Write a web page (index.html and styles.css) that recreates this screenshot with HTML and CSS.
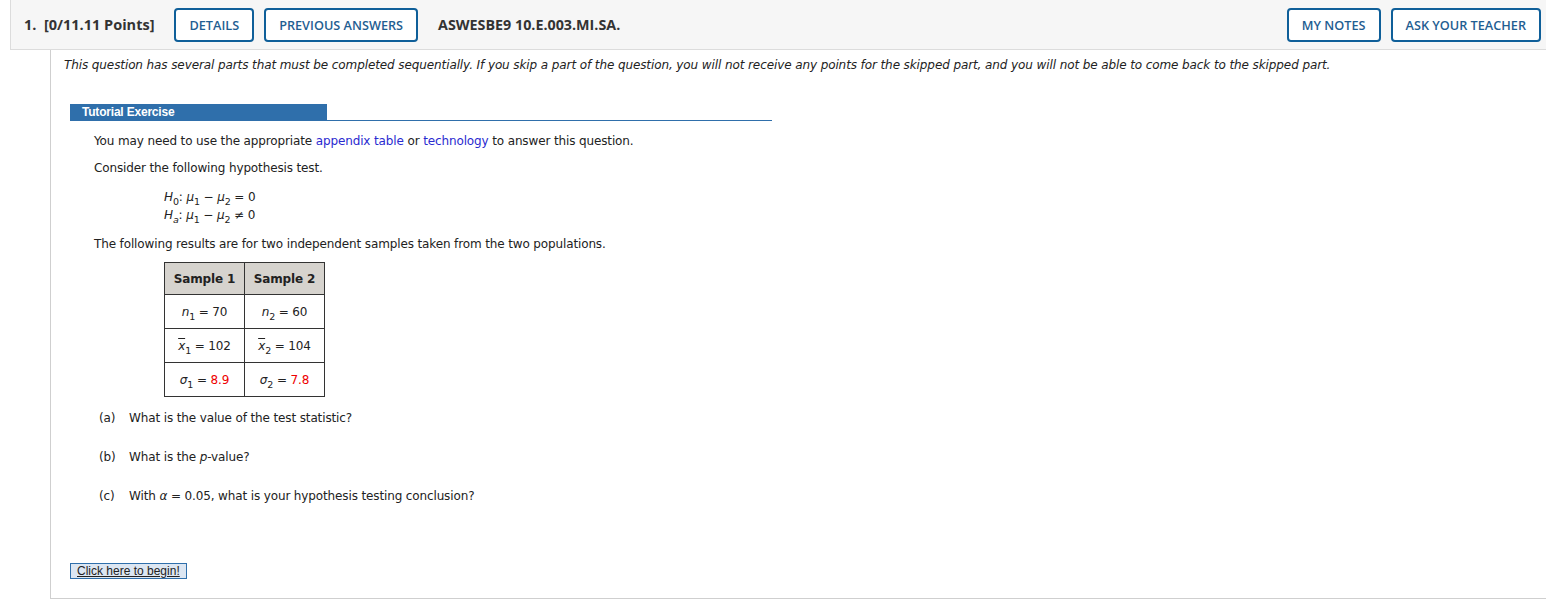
FILE: index.html
```html
<!DOCTYPE html>
<html>
<head>
<meta charset="utf-8">
<link rel="stylesheet" href="styles.css">
</head>
<body>
<div class="qhead">
  <div class="qnum">1.&nbsp; [0/11.11 Points]</div>
  <button class="btn">DETAILS</button>
  <button class="btn">PREVIOUS ANSWERS</button>
  <div class="qcode">ASWESBE9 10.E.003.MI.SA.</div>
  <div class="spacer"></div>
  <button class="btn">MY NOTES</button>
  <button class="btn">ASK YOUR TEACHER</button>
</div>
<div class="qbody">
  <p class="notice">This question has several parts that must be completed sequentially. If you skip a part of the question, you will not receive any points for the skipped part, and you will not be able to come back to the skipped part.</p>
  <div class="tut">
    <div class="tut-title"><span class="tut-tab">Tutorial Exercise</span></div>
    <div class="tut-content">
      <p>You may need to use the appropriate <span class="lnk">appendix table</span> or <span class="lnk">technology</span> to answer this question.</p>
      <p>Consider the following hypothesis test.</p>
      <div class="hyp">
        <div><i>H</i><sub>0</sub>: <i>μ</i><sub>1</sub> − <i>μ</i><sub>2</sub> = 0</div>
        <div><i>H</i><sub><i>a</i></sub>: <i>μ</i><sub>1</sub> − <i>μ</i><sub>2</sub> ≠ 0</div>
      </div>
      <p class="pre-table">The following results are for two independent samples taken from the two populations.</p>
      <table class="data">
        <tr><th>Sample 1</th><th>Sample 2</th></tr>
        <tr><td><i>n</i><sub>1</sub> = 70</td><td><i>n</i><sub>2</sub> = 60</td></tr>
        <tr><td><i class="bar">x</i><sub>1</sub> = 102</td><td><i class="bar">x</i><sub>2</sub> = 104</td></tr>
        <tr><td><i>σ</i><sub>1</sub> = <span class="red">8.9</span></td><td><i>σ</i><sub>2</sub> = <span class="red">7.8</span></td></tr>
      </table>
      <div class="part"><span class="plabel">(a)</span>What is the value of the test statistic?</div>
      <div class="part"><span class="plabel">(b)</span>What is the <i>p</i>-value?</div>
      <div class="part"><span class="plabel">(c)</span>With <i>α</i> = 0.05, what is your hypothesis testing conclusion?</div>
    </div>
    <button class="begin">Click here to begin!</button>
  </div>
</div>
</body>
</html>
```
FILE: styles.css
```css
html, body { margin: 0; padding: 0; background: #fff; }
body { width: 1546px; height: 604px; overflow: hidden; }

.qhead {
  margin-left: 10px;
  height: 50px;
  background: #f6f6f6;
  border-left: 1px solid #dcdcdc;
  border-bottom: 1px solid #dcdcdc;
  display: flex;
  align-items: center;
  padding: 0 5px 0 13px;
  box-sizing: border-box;
  font-family: "Open Sans", sans-serif;
}
.qnum { font-weight: 700; font-size: 14.5px; color: #333; margin-right: 20px; }
.qcode { font-weight: 700; font-size: 14.3px; color: #333; margin-left: 10px; }
.spacer { flex: 1; }
.btn {
  font-family: "Open Sans", sans-serif;
  font-size: 12.7px;
  font-weight: 600;
  color: #1f5e92;
  background: #fff;
  border: 2px solid #0f5f99;
  border-radius: 4px;
  height: 34px;
  padding: 0 13px;
  margin-right: 10px;
  box-sizing: border-box;
}
.btn:last-child { margin-right: 0; }

.qbody {
  margin-left: 50px;
  height: 549px;
  border-left: 1px solid #cfcfcf;
  border-bottom: 1px solid #cfcfcf;
  box-sizing: border-box;
  font-family: "DejaVu Sans", Verdana, sans-serif;
  font-size: 12px;
  letter-spacing: -0.13px;
  color: #222;
  padding: 8px 0 0 13px;
}
.notice { font-style: italic; margin: 0; line-height: 14px; letter-spacing: -0.1px; }

.tut { margin-top: 32px; margin-left: 6px; }
.tut-title {
  width: 702px;
  border-bottom: 1px solid #2f6fab;
  height: 16px;
}
.tut-tab {
  display: inline-block;
  width: 257px;
  height: 16px;
  background: #2f6fab;
  color: #fff;
  font-family: "Liberation Sans", Arial, sans-serif;
  font-weight: 700;
  font-size: 12px;
  letter-spacing: -0.2px;
  line-height: 16px;
  padding-left: 12px;
  box-sizing: border-box;
}
.tut-content { padding-left: 24px; padding-top: 13px; }
.tut-content p { margin: 0 0 12px; line-height: 15px; }
.tut-content p.pre-table { margin-bottom: 10px; }
.lnk { color: #2a2ad0; }
.hyp { margin-left: 70px; margin-bottom: 13px; line-height: 18px; }
sub { font-size: 9.5px; vertical-align: -4px; line-height: 0; }
i { font-style: italic; }

.data {
  border-collapse: collapse;
  margin: 0 0 14px 70px;
}
.data th, .data td {
  border: 1px solid #333;
  text-align: center;
  width: 79px;
  padding: 0;
}
.data th { background: #d6d3ce; font-weight: 700; height: 31px; font-size: 12px; }
.data td { height: 33px; }
.bar { text-decoration: overline; }
.red { color: #e00; }

.part { line-height: 15px; margin-bottom: 24px; padding-left: 5px; }
.plabel { display: inline-block; width: 30px; }

.begin {
  margin-top: 35px;
  font-family: "Liberation Sans", Arial, sans-serif;
  font-size: 12px;
  letter-spacing: 0;
  text-decoration: underline;
  color: #222;
  background: #dce6f2;
  border: 1px solid #2f6fab;
  padding: 0 6px;
  height: 16px;
  line-height: 14px;
}
```
